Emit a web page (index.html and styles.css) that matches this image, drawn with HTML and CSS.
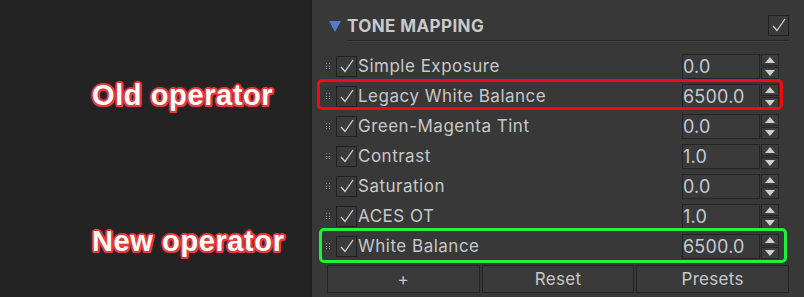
FILE: index.html
```html
<!DOCTYPE html>
<html>
<head>
<meta charset="utf-8">
<link rel="stylesheet" href="styles.css">
</head>
<body>
<div class="app">
  <div class="notes">
    <div class="note note-old">Old operator</div>
    <div class="note note-new">New operator</div>
  </div>
  <div class="panel">
    <div class="header">
      <svg class="tri" width="12" height="12" viewBox="0 0 12 12"><path d="M0 1 H12 L6 12 Z" fill="#4f7ec9"/></svg>
      <div class="head-main">
        <span class="title">TONE MAPPING</span>
        <span class="chk head-chk"><svg width="19" height="19" viewBox="0 0 19 19"><path d="M4 10 L8 14.5 L16 3" fill="none" stroke="#d4d4d4" stroke-width="1.3"/></svg></span>
      </div>
    </div>
    <div class="list">
      <div class="row">
        <span class="grip"><i></i><i></i><i></i><i></i><i></i><i></i></span>
        <span class="chk"><svg width="19" height="19" viewBox="0 0 19 19"><path d="M4 10 L8 14.5 L16 3" fill="none" stroke="#d4d4d4" stroke-width="1.3"/></svg></span>
        <span class="label">Simple Exposure</span>
        <span class="field">0.0</span>
        <span class="spin"><span class="sb"><svg width="10" height="6" viewBox="0 0 10 6"><path d="M0 6 L5 0 L10 6 Z" fill="#cfcfcf"/></svg></span><span class="sb"><svg width="10" height="6" viewBox="0 0 10 6"><path d="M0 0 L5 6 L10 0 Z" fill="#cfcfcf"/></svg></span></span>
      </div>
      <div class="row">
        <span class="grip"><i></i><i></i><i></i><i></i><i></i><i></i></span>
        <span class="chk"><svg width="19" height="19" viewBox="0 0 19 19"><path d="M4 10 L8 14.5 L16 3" fill="none" stroke="#d4d4d4" stroke-width="1.3"/></svg></span>
        <span class="label">Legacy White Balance</span>
        <span class="field">6500.0</span>
        <span class="spin"><span class="sb"><svg width="10" height="6" viewBox="0 0 10 6"><path d="M0 6 L5 0 L10 6 Z" fill="#cfcfcf"/></svg></span><span class="sb"><svg width="10" height="6" viewBox="0 0 10 6"><path d="M0 0 L5 6 L10 0 Z" fill="#cfcfcf"/></svg></span></span>
        <span class="mark mark-red"></span>
      </div>
      <div class="row">
        <span class="grip"><i></i><i></i><i></i><i></i><i></i><i></i></span>
        <span class="chk"><svg width="19" height="19" viewBox="0 0 19 19"><path d="M4 10 L8 14.5 L16 3" fill="none" stroke="#d4d4d4" stroke-width="1.3"/></svg></span>
        <span class="label">Green-Magenta Tint</span>
        <span class="field">0.0</span>
        <span class="spin"><span class="sb"><svg width="10" height="6" viewBox="0 0 10 6"><path d="M0 6 L5 0 L10 6 Z" fill="#cfcfcf"/></svg></span><span class="sb"><svg width="10" height="6" viewBox="0 0 10 6"><path d="M0 0 L5 6 L10 0 Z" fill="#cfcfcf"/></svg></span></span>
      </div>
      <div class="row">
        <span class="grip"><i></i><i></i><i></i><i></i><i></i><i></i></span>
        <span class="chk"><svg width="19" height="19" viewBox="0 0 19 19"><path d="M4 10 L8 14.5 L16 3" fill="none" stroke="#d4d4d4" stroke-width="1.3"/></svg></span>
        <span class="label">Contrast</span>
        <span class="field">1.0</span>
        <span class="spin"><span class="sb"><svg width="10" height="6" viewBox="0 0 10 6"><path d="M0 6 L5 0 L10 6 Z" fill="#cfcfcf"/></svg></span><span class="sb"><svg width="10" height="6" viewBox="0 0 10 6"><path d="M0 0 L5 6 L10 0 Z" fill="#cfcfcf"/></svg></span></span>
      </div>
      <div class="row">
        <span class="grip"><i></i><i></i><i></i><i></i><i></i><i></i></span>
        <span class="chk"><svg width="19" height="19" viewBox="0 0 19 19"><path d="M4 10 L8 14.5 L16 3" fill="none" stroke="#d4d4d4" stroke-width="1.3"/></svg></span>
        <span class="label">Saturation</span>
        <span class="field">0.0</span>
        <span class="spin"><span class="sb"><svg width="10" height="6" viewBox="0 0 10 6"><path d="M0 6 L5 0 L10 6 Z" fill="#cfcfcf"/></svg></span><span class="sb"><svg width="10" height="6" viewBox="0 0 10 6"><path d="M0 0 L5 6 L10 0 Z" fill="#cfcfcf"/></svg></span></span>
      </div>
      <div class="row">
        <span class="grip"><i></i><i></i><i></i><i></i><i></i><i></i></span>
        <span class="chk"><svg width="19" height="19" viewBox="0 0 19 19"><path d="M4 10 L8 14.5 L16 3" fill="none" stroke="#d4d4d4" stroke-width="1.3"/></svg></span>
        <span class="label">ACES OT</span>
        <span class="field">1.0</span>
        <span class="spin"><span class="sb"><svg width="10" height="6" viewBox="0 0 10 6"><path d="M0 6 L5 0 L10 6 Z" fill="#cfcfcf"/></svg></span><span class="sb"><svg width="10" height="6" viewBox="0 0 10 6"><path d="M0 0 L5 6 L10 0 Z" fill="#cfcfcf"/></svg></span></span>
      </div>
      <div class="row">
        <span class="grip"><i></i><i></i><i></i><i></i><i></i><i></i></span>
        <span class="chk"><svg width="19" height="19" viewBox="0 0 19 19"><path d="M4 10 L8 14.5 L16 3" fill="none" stroke="#d4d4d4" stroke-width="1.3"/></svg></span>
        <span class="label">White Balance</span>
        <span class="field">6500.0</span>
        <span class="spin"><span class="sb"><svg width="10" height="6" viewBox="0 0 10 6"><path d="M0 6 L5 0 L10 6 Z" fill="#cfcfcf"/></svg></span><span class="sb"><svg width="10" height="6" viewBox="0 0 10 6"><path d="M0 0 L5 6 L10 0 Z" fill="#cfcfcf"/></svg></span></span>
        <span class="mark mark-green"></span>
      </div>
    </div>
    <div class="buttons">
      <span class="btn">+</span>
      <span class="btn">Reset</span>
      <span class="btn">Presets</span>
    </div>
  </div>
</div>
</body>
</html>
```

FILE: styles.css
```css
* { box-sizing: border-box; }
html, body { margin: 0; padding: 0; }
body {
  width: 804px;
  height: 297px;
  overflow: hidden;
  background: #232323;
  font-family: Inter, "Noto Sans", sans-serif;
}
.app {
  display: flex;
  height: 297px;
}
.notes {
  width: 311px;
  flex: none;
  background: #232323;
  padding: 80px 0 0 92px;
  display: flex;
  flex-direction: column;
  gap: 116px;
}
.note {
  font-family: "Liberation Sans", Arial, sans-serif;
  font-weight: bold;
  font-size: 29px;
  line-height: 30px;
  letter-spacing: 0.6px;
  color: #ffffff;
  white-space: nowrap;
  text-shadow:
    2px 0 0 #e8393b, -2px 0 0 #e8393b, 0 2px 0 #e8393b, 0 -2px 0 #e8393b,
    1.5px 1.5px 0 #e8393b, -1.5px 1.5px 0 #e8393b, 1.5px -1.5px 0 #e8393b, -1.5px -1.5px 0 #e8393b,
    0 0 4px rgba(255, 70, 70, 0.7);
}
.panel {
  flex: 1;
  background: #383838;
  border-left: 1px solid #1f1f1f;
  display: flex;
  flex-direction: column;
}
.header {
  display: flex;
  align-items: center;
  margin-top: 12px;
  height: 29px;
  padding: 0 15px 0 17px;
}
.tri {
  flex: none;
  margin-right: 6px;
  margin-top: -2px;
}
.head-main {
  flex: 1;
  display: flex;
  align-items: center;
  justify-content: space-between;
  height: 29px;
  border-bottom: 1px solid #262626;
  box-shadow: 0 1px 0 #444444;
}
.title {
  font-weight: 700;
  font-size: 17px;
  color: #c9c9c9;
  letter-spacing: 0.4px;
}
.chk {
  width: 21px;
  height: 21px;
  border: 1px solid #202020;
  background: #3a3a3a;
  display: flex;
  align-items: center;
  justify-content: center;
  flex: none;
}
.head-chk {
  margin-top: -2px;
}
.list {
  margin-top: 10px;
  display: flex;
  flex-direction: column;
}
.row {
  position: relative;
  display: flex;
  align-items: center;
  height: 30px;
  padding: 0 25px 0 14px;
}
.grip {
  width: 6px;
  height: 6px;
  display: grid;
  grid-template-columns: 1px 1px;
  grid-template-rows: 1px 1px 1px;
  column-gap: 2px;
  row-gap: 1.5px;
  margin-right: 4px;
  flex: none;
}
.grip i {
  display: block;
  width: 1px;
  height: 1px;
  background: #8a8a8a;
}
.label {
  flex: 1;
  margin-left: 1px;
  font-size: 17px;
  letter-spacing: 0.5px;
  color: #c8c8c8;
  white-space: nowrap;
}
.field {
  width: 78px;
  height: 25px;
  border: 1px solid #242424;
  background: #3a3a3a;
  font-size: 18px;
  line-height: 23px;
  letter-spacing: 0.2px;
  color: #c2cad6;
  padding-left: 0;
  flex: none;
}
.spin {
  display: flex;
  flex-direction: column;
  gap: 1px;
  margin-left: 1px;
  flex: none;
}
.sb {
  width: 18px;
  height: 12px;
  border: 1px solid #262626;
  background: #3d3d3d;
  display: flex;
  align-items: center;
  justify-content: center;
}
.mark {
  position: absolute;
  border-style: solid;
  border-width: 3px;
  border-radius: 5px;
  pointer-events: none;
}
.mark-red {
  border-color: #f80a0a;
  top: -2px;
  height: 31px;
  left: 5px;
  right: 21px;
}
.mark-green {
  border-color: #20f040;
  top: -3px;
  height: 35px;
  left: 7px;
  right: 17px;
}
.buttons {
  display: flex;
  gap: 2px;
  margin-top: 4px;
  padding: 0 15px;
}
.btn {
  flex: 1;
  height: 28px;
  border: 1px solid #242424;
  background: #3a3a3a;
  color: #c8c8c8;
  font-size: 17px;
  letter-spacing: 0.3px;
  display: flex;
  align-items: center;
  justify-content: center;
}
```
